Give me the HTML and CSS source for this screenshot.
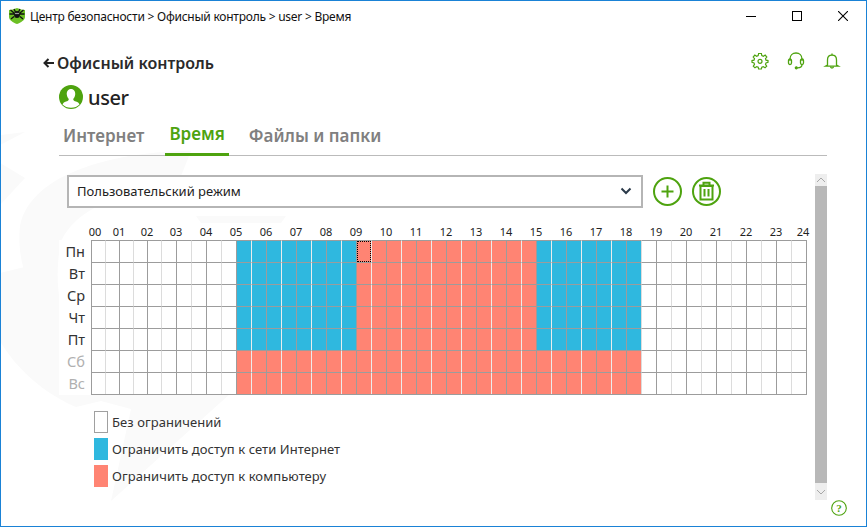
FILE: index.html
```html
<!DOCTYPE html>
<html lang="ru">
<head>
    <meta charset="UTF-8">
    <title>Центр безопасности</title>
    <link rel="stylesheet" href="styles.css">
</head>
<body>
    <div class="window">
        <!-- watermark -->
        <svg class="watermark" width="865" height="525" viewBox="0 0 865 525">
            <path d="M-1 134 L24 131 L-1 144 Z"/>
            <path d="M-1 162 L24 177 L-1 204 Z"/>
            <path d="M190 150 C120 150 30 170 19 225 C14 275 40 310 70 332 L40 262 L-1 272 L-1 340 C20 375 50 395 75 406 L100 400 L130 408 L110 500 L230 392 L120 392 C60 350 50 290 60 240 C80 200 130 190 170 200 Z"/>
            <path d="M195 215 L285 215 L280 222 L200 222 Z"/>
        </svg>

        <div class="titlebar">
            <svg class="app-logo" width="16" height="16" viewBox="0 0 16 16">
                <path d="M0 2 C3 2 5 1 8 0 C11 1 13 2 16 2 V9 C16 12 12 14.500 8 16 C4 14.500 0 12 0 9 Z" fill="#6cc024"/>
                <ellipse cx="8" cy="6.500" rx="3" ry="3.500" fill="#111"/>
                <path d="M1.500 2 L5 5 M14.500 2 L11 5 M.5 6 H5 M15.500 6 H11 M2 11 L5 8.500 M14 11 L11 8.500 M5 1 L6.500 4 M11 1 L9.500 4" stroke="#111" stroke-width="1.300" fill="none"/>
                <circle cx="7" cy="5.500" r=".7" fill="#fff"/>
                <circle cx="9" cy="5.500" r=".7" fill="#fff"/>
            </svg>
            <span class="title-text">Центр безопасности &gt; Офисный контроль &gt; user &gt; Время</span>
            <div class="win-buttons">
                <button class="win-btn"><svg width="10" height="10" viewBox="0 0 10 10"><path d="M0 5.500 H10" stroke="#000"/></svg></button>
                <button class="win-btn"><svg width="10" height="10" viewBox="0 0 10 10"><rect x=".5" y=".5" width="9" height="9" fill="none" stroke="#000"/></svg></button>
                <button class="win-btn"><svg width="10" height="10" viewBox="0 0 10 10"><path d="M0 0 L10 10 M10 0 L0 10" stroke="#000" stroke-width="1.100"/></svg></button>
            </div>
        </div>

        <div class="page-head">
            <div class="back-link">
                <svg width="11" height="10" viewBox="0 0 11 10"><path d="M11 5 H2 M5.500 1 L1.500 5 L5.500 9" fill="none" stroke="#222" stroke-width="2"/></svg>
                <span>Офисный контроль</span>
            </div>
            <div class="head-icons">
                <svg width="18" height="18" viewBox="0 0 18 18" fill="none" stroke="#4ea30f" stroke-width="1.200">
                    <path d="M7.600 1.500 H10.400 L10.800 3.600 L12.400 4.300 L14.200 3.100 L15.800 5 L14.500 6.700 L15 8.200 L17 8.600 V10.400 L15 10.900 L14.500 12.400 L15.700 14.100 L14 15.800 L12.300 14.600 L10.800 15.200 L10.400 17 H7.600 L7.200 15.200 L5.700 14.600 L4 15.800 L2.300 14.100 L3.500 12.400 L3 10.900 L1 10.400 V8.600 L3 8.200 L3.500 6.700 L2.200 5 L3.800 3.100 L5.600 4.300 L7.200 3.600 Z"/>
                    <circle cx="9" cy="9.300" r="2"/>
                </svg>
                <svg width="18" height="18" viewBox="0 0 18 18" fill="none" stroke="#4ea30f" stroke-width="1.300">
                    <path d="M3 9 V7 C3 3.500 5.500 1 9 1 C12.500 1 15 3.500 15 7 V9"/>
                    <rect x="1.500" y="7" width="3" height="5.500" rx="1.500"/>
                    <rect x="13.500" y="7" width="3" height="5.500" rx="1.500"/>
                    <path d="M15 12.500 C15 15 13 15.800 10.500 15.800"/>
                    <circle cx="9.300" cy="15.800" r="1" fill="#4ea30f"/>
                </svg>
                <svg width="18" height="18" viewBox="-1 -1 18 18" fill="none" stroke="#4ea30f" stroke-width="1.300">
                    <path d="M3.500 12 V7 C3.500 4 5.500 2.200 8 2.200 C10.500 2.200 12.500 4 12.500 7 V12 L14.500 13.200 H1.500 Z"/>
                    <path d="M8 .5 V2.200 M6.500 13.500 C6.500 15.500 9.500 15.500 9.500 13.500"/>
                </svg>
            </div>
        </div>

        <div class="content">
            <div class="user-row">
                <svg width="24" height="24" viewBox="0 0 24 24">
                    <circle cx="12" cy="12" r="12" fill="#4ea30f"/>
                    <path d="M12 4 C15 4 16.500 6.500 16.200 9.500 C16 11.500 15 13 14.200 14 C14.200 15.500 15.500 16 17 16.600 C18.500 17.200 20 18 20.500 19.500 C18.500 21.500 15.500 22.800 12 22.800 C8.500 22.800 5.500 21.500 3.500 19.500 C4 18 5.500 17.200 7 16.600 C8.500 16 9.800 15.500 9.800 14 C9 13 8 11.500 7.800 9.500 C7.500 6.500 9 4 12 4 Z" fill="#fff"/>
                </svg>
                <span class="user-name">user</span>
            </div>

            <div class="tabs">
                <a class="tab">Интернет</a>
                <a class="tab active">Время</a>
                <a class="tab">Файлы и папки</a>
            </div>

            <div class="body-row">
                <div class="panel">
                    <div class="mode-row">
                        <div class="mode-select">
                            <span>Пользовательский режим</span>
                            <svg width="12" height="8" viewBox="0 0 12 8"><path d="M1.500 1.500 L6 6 L10.500 1.500" fill="none" stroke="#2b3a4a" stroke-width="2"/></svg>
                        </div>
                        <button class="round-btn">
                            <svg width="29" height="29" viewBox="0 0 29 29" fill="none" stroke="#4ea30f">
                                <circle cx="14.500" cy="14.500" r="13.500" stroke-width="2"/>
                                <path d="M14.500 8.500 V20.500 M8.500 14.500 H20.500" stroke-width="2"/>
                            </svg>
                        </button>
                        <button class="round-btn">
                            <svg width="29" height="29" viewBox="0 0 29 29" fill="none" stroke="#4ea30f">
                                <circle cx="14.500" cy="14.500" r="13.500" stroke-width="2"/>
                                <path d="M7 8.500 H22 M11.500 8 V5.800 H17.500 V8" stroke-width="2"/>
                                <rect x="8.500" y="9" width="12" height="13.500" stroke-width="2"/>
                                <path d="M12.500 12 V19.500 M16.500 12 V19.500" stroke-width="2"/>
                            </svg>
                        </button>
                    </div>

                    <div class="schedule">
                        <div class="hours" id="hours"></div>
                        <div class="schedule-main">
                            <div class="days">
                                <div class="day">Пн</div>
                                <div class="day">Вт</div>
                                <div class="day">Ср</div>
                                <div class="day">Чт</div>
                                <div class="day">Пт</div>
                                <div class="day weekend">Сб</div>
                                <div class="day weekend">Вс</div>
                            </div>
                            <div class="grid" id="grid"></div>
                        </div>
                    </div>

                    <div class="legend">
                        <div class="legend-item"><span class="swatch swatch-free"></span>Без ограничений</div>
                        <div class="legend-item"><span class="swatch swatch-net"></span>Ограничить доступ к сети Интернет</div>
                        <div class="legend-item"><span class="swatch swatch-pc"></span>Ограничить доступ к компьютеру</div>
                    </div>
                </div>

                <div class="scrollbar">
                    <div class="scroll-btn"><svg width="10" height="6" viewBox="0 0 10 6"><path d="M1 5 L5 1 L9 5" fill="none" stroke="#a8a8a8"/></svg></div>
                    <div class="scroll-thumb"></div>
                    <div class="scroll-btn scroll-btn-down"><svg width="10" height="6" viewBox="0 0 10 6"><path d="M1 1 L5 5 L9 1" fill="none" stroke="#a8a8a8"/></svg></div>
                </div>
            </div>
        </div>

        <svg class="help" width="16" height="16" viewBox="0 0 16 16">
            <circle cx="8" cy="8" r="7.300" fill="none" stroke="#4ea30f" stroke-width="1.100"/>
            <text x="8" y="12" text-anchor="middle" class="help-mark">?</text>
        </svg>
    </div>

    <script src="schedule.js"></script>
</body>
</html>
```

FILE: styles.css
```css
* {
    box-sizing: border-box;
}

body {
    margin: 0;
    font-family: "Noto Sans", "Open Sans", sans-serif;
    color: #222;
    background: white;
}

button {
    border: none;
    background: none;
    padding: 0;
    display: flex;
}

.window {
    position: relative;
    width: 867px;
    height: 527px;
    border: 1px solid #1a82d6;
    overflow: hidden;
}

.watermark {
    position: absolute;
    left: 0;
    top: 0;
    fill: #fafafa;
}

.titlebar {
    position: relative;
    display: flex;
    align-items: center;
    height: 30px;
    padding-left: 8px;
}

.app-logo {
    margin-right: 5px;
}

.title-text {
    font-size: 12px;
    letter-spacing: -0.24px;
    color: #111;
}

.win-buttons {
    display: flex;
    margin-left: auto;
}

.win-btn {
    width: 46px;
    height: 30px;
    align-items: center;
    justify-content: center;
}

.page-head {
    position: relative;
    display: flex;
    align-items: center;
    justify-content: space-between;
    height: 24px;
    margin-top: 20px;
    padding: 0 25px 0 42px;
}

.back-link {
    display: flex;
    align-items: center;
    gap: 3px;
    font-size: 16px;
    font-weight: 600;
    color: #2a2a2a;
}

.head-icons {
    display: flex;
    align-items: center;
    gap: 18px;
    margin-bottom: 4px;
}

.content {
    position: relative;
    margin-left: 58px;
    width: 768px;
}

.user-row {
    display: flex;
    align-items: center;
    gap: 5px;
    height: 24px;
    margin-top: 10px;
}

.user-name {
    padding-top: 1px;
    font-size: 20px;
    font-weight: 500;
    letter-spacing: -0.4px;
    color: #222;
}

.tabs {
    display: flex;
    height: 44px;
    margin-top: 3px;
    border-bottom: 1px solid #bbb;
}

.tab {
    display: flex;
    align-items: center;
    height: 44px;
    padding: 2px 4px 0;
    margin-right: 16px;
    font-size: 17px;
    font-weight: 600;
    color: #808080;
}

.tab:first-child {
    margin-right: 17px;
}

.tab.active {
    color: #4ea30f;
    border-bottom: 3px solid #4ea30f;
}

.body-row {
    display: flex;
    justify-content: space-between;
    margin-top: 18px;
}

.panel {
    padding-top: 1px;
}

.mode-row {
    display: flex;
    align-items: center;
    gap: 10px;
    margin-left: 8px;
}

.mode-select {
    display: flex;
    align-items: center;
    justify-content: space-between;
    width: 576px;
    height: 33px;
    padding: 0 9px 2px 8px;
    border: 2px solid #b5b5b5;
    background: white;
    font-size: 13px;
    color: #222;
}

.schedule {
    margin-top: 15px;
}

.hours {
    display: grid;
    grid-template-columns: repeat(5, 14px) repeat(43, 15px) 0;
    height: 17px;
    margin-left: 32px;
}

.hour {
    display: flex;
    justify-content: center;
    width: 0;
    font-size: 11px;
    line-height: 17px;
    color: #222;
}

.hour:first-child {
    margin-left: 4px;
}

.hour:last-child {
    margin-left: -3px;
}

.schedule-main {
    display: flex;
}

.days {
    width: 32px;
    padding-right: 6px;
    background: white;
}

.day {
    height: 22px;
    font-size: 14.500px;
    line-height: 22px;
    text-align: right;
    color: #333;
}

.day.weekend {
    color: #b0b0b0;
}

.grid {
    display: grid;
    grid-template-columns: repeat(5, 14px) repeat(43, 15px);
    grid-auto-rows: 22px;
    border-right: 1px solid #9c9c9c;
    border-bottom: 1px solid #9c9c9c;
    background: white;
}

.cell {
    position: relative;
    border-top: 1px solid #9c9c9c;
    border-left: 1px solid #dcdcdc;
}

.cell.hour-start {
    border-left-color: #9c9c9c;
}

.cell.net {
    background: #2fb8df;
}

.cell.pc {
    background: #ff8473;
}

.cell.net:not(.hour-start),
.cell.pc:not(.hour-start) {
    border-left-color: #ececec;
}

.cell.focused::after {
    content: "";
    position: absolute;
    left: 0;
    top: 0;
    right: 0;
    bottom: 0;
    border: 1px dotted #000;
}

.legend {
    display: flex;
    flex-direction: column;
    gap: 5px;
    margin: 16px 0 0 35px;
}

.legend-item {
    display: flex;
    align-items: center;
    gap: 4px;
    height: 22px;
    font-size: 13px;
    letter-spacing: 0.07px;
    color: #333;
}

.swatch {
    width: 14px;
    height: 22px;
}

.swatch-free {
    border: 1px solid #a0a0a0;
    background: white;
}

.swatch-net {
    background: #2fb8df;
}

.swatch-pc {
    background: #ff8473;
}

.scrollbar {
    display: flex;
    flex-direction: column;
    flex-shrink: 0;
    width: 12px;
    height: 326px;
}

.scroll-btn {
    display: flex;
    align-items: center;
    justify-content: center;
    height: 12px;
    background: #eeeeee;
}

.scroll-btn-down {
    height: 17px;
}

.scroll-thumb {
    flex: 1;
    background: #b8b8b8;
}

.help {
    position: absolute;
    left: 830px;
    top: 499px;
}

.help-mark {
    font-family: "Liberation Serif", serif;
    font-size: 11px;
    font-weight: bold;
    fill: #4ea30f;
}
```

FILE: schedule.js
```js
// строим сетку расписания: 7 дней по 48 получасов
const grid = document.getElementById('grid');
const hours = document.getElementById('hours');

for (let h = 0; h <= 24; h++) {
    const label = document.createElement('div');
    label.className = 'hour';
    label.textContent = String(h).padStart(2, '0');
    label.style.gridColumn = h * 2 + 1;
    hours.appendChild(label);
}

function cellMode(day, slot) {
    if (slot < 10 || slot > 36) return '';
    if (day > 4) return 'pc';
    if (slot >= 18 && slot < 30) return 'pc';
    return 'net';
}

for (let day = 0; day < 7; day++) {
    for (let slot = 0; slot < 48; slot++) {
        const cell = document.createElement('div');
        cell.className = 'cell ' + cellMode(day, slot);
        if (slot % 2 === 0) cell.classList.add('hour-start');
        if (day === 0 && slot === 18) cell.classList.add('focused');
        grid.appendChild(cell);
    }
}
```
